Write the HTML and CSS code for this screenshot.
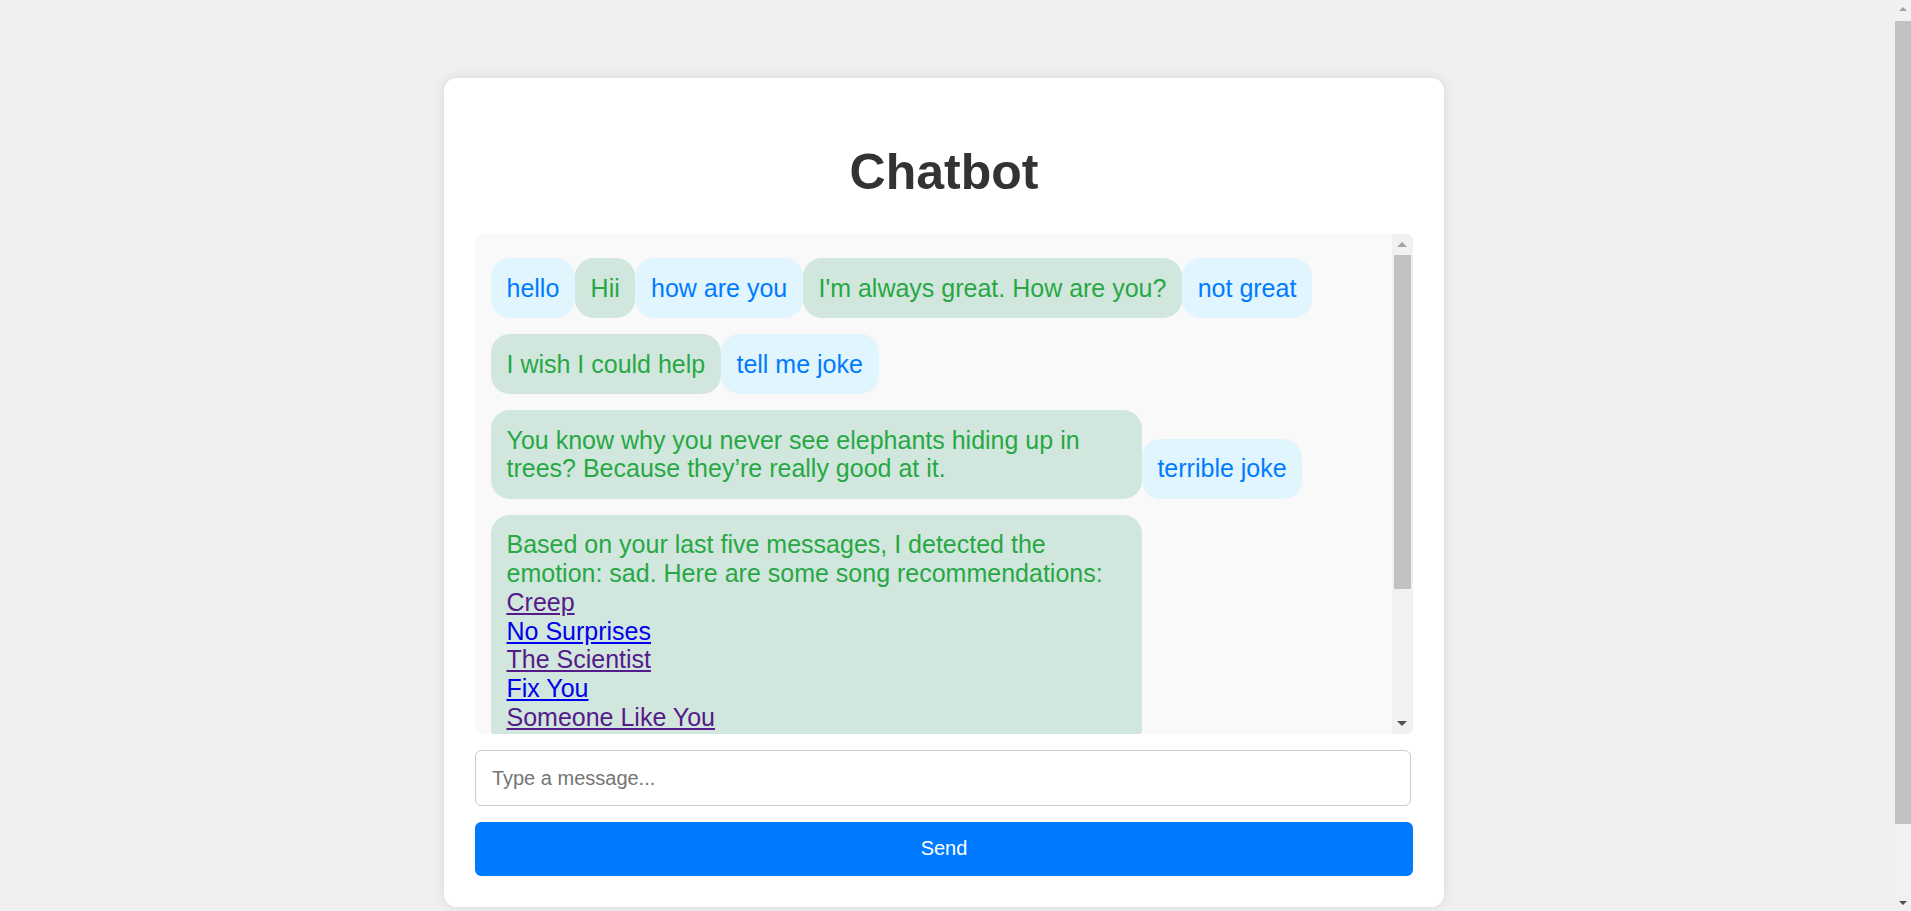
FILE: index.html
```html
<!DOCTYPE html>
<html lang="en">
<head>
<meta charset="utf-8">
<title>Chatbot</title>
<link rel="stylesheet" href="styles.css">
</head>
<body>
<div class="page">
  <div class="card">
    <h1 class="title">Chatbot</h1>
    <div class="chat-box">
      <div class="messages">
        <div class="msg user">hello</div>
        <div class="msg bot">Hii</div>
        <div class="msg user">how are you</div>
        <div class="msg bot">I'm always great. How are you?</div>
        <div class="msg user">not great</div>
        <div class="msg bot">I wish I could help</div>
        <div class="msg user">tell me joke</div>
        <div class="msg bot">You know why you never see elephants hiding up in trees? Because they’re really good at it.</div>
        <div class="msg user">terrible joke</div>
        <div class="msg bot">Based on your last five messages, I detected the emotion: sad. Here are some song recommendations:<br><a class="song visited" href="#creep">Creep</a><br><a class="song" href="#no-surprises">No Surprises</a><br><a class="song visited" href="#the-scientist">The Scientist</a><br><a class="song" href="#fix-you">Fix You</a><br><a class="song visited" href="#someone-like-you">Someone Like You</a></div>
      </div>
      <div class="vscroll inner">
        <div class="sb-btn"><svg width="10" height="5" viewBox="0 0 10 5"><polygon points="5,0 10,5 0,5" fill="#a3a3a3"/></svg></div>
        <div class="sb-track"><div class="sb-thumb"></div></div>
        <div class="sb-btn"><svg width="10" height="5" viewBox="0 0 10 5"><polygon points="0,0 10,0 5,5" fill="#505050"/></svg></div>
      </div>
    </div>
    <input class="chat-input" type="text" placeholder="Type a message...">
    <button class="send-btn" type="button">Send</button>
  </div>
</div>
<div class="vscroll page-sb">
  <div class="sb-btn"><svg width="8" height="4" viewBox="0 0 8 4"><polygon points="4,0 8,4 0,4" fill="#a3a3a3"/></svg></div>
  <div class="sb-track"><div class="sb-thumb"></div></div>
  <div class="sb-btn"><svg width="8" height="4" viewBox="0 0 8 4"><polygon points="0,0 8,0 4,4" fill="#505050"/></svg></div>
</div>
</body>
</html>
```

FILE: styles.css
```css
html {
  background: #f0f0f0;
}

body {
  margin: 0;
  font-family: "Liberation Sans", Arial, sans-serif;
  background: #f0f0f0;
}

.page {
  padding: 78px 23px 86px 0;
}

.card {
  box-sizing: border-box;
  width: 1000px;
  margin: 0 auto;
  padding: 31.25px;
  background: #ffffff;
  border-radius: 12.5px;
  box-shadow: 0 0 12.5px rgba(0, 0, 0, 0.1);
}

.title {
  margin: 33.5px 0;
  font-size: 50px;
  font-weight: bold;
  color: #333333;
  text-align: center;
}

.chat-box {
  display: flex;
  height: 500px;
  background: #f9f9f9;
  border-radius: 6.25px;
  overflow: hidden;
}

.messages {
  flex: 1;
  min-width: 0;
  padding: 15.625px;
  display: flex;
  flex-wrap: wrap;
  align-items: last baseline;
  align-content: flex-start;
  overflow: hidden;
}

.msg {
  max-width: 70%;
  margin: 8px 0;
  padding: 15.625px;
  font-size: 25px;
  line-height: 28.75px;
  border-radius: 18.75px;
}

.msg.user {
  background: #e1f5fe;
  color: #007bff;
}

.msg.bot {
  background: #d1e7dd;
  color: #28a745;
}

.song {
  color: #0000ee;
  text-decoration: underline;
}

.song.visited {
  color: #551a8b;
}

.chat-input {
  display: block;
  box-sizing: border-box;
  width: calc(100% - 1.5px);
  margin: 15.625px 0 0;
  padding: 15.625px;
  font-family: "Liberation Sans", Arial, sans-serif;
  font-size: 20px;
  line-height: normal;
  color: #333333;
  background: #ffffff;
  border: 1px solid #cccccc;
  border-radius: 6.25px;
  outline: none;
}

.chat-input::placeholder {
  color: #757575;
}

.send-btn {
  display: block;
  box-sizing: border-box;
  width: 100%;
  margin: 15.625px 0 0;
  padding: 15.625px;
  font-family: "Liberation Sans", Arial, sans-serif;
  font-size: 20px;
  line-height: normal;
  color: #ffffff;
  background: #007bff;
  border: none;
  border-radius: 6.25px;
}

/* drawn scrollbars */
.vscroll {
  display: flex;
  flex-direction: column;
  background: #f1f1f1;
}

.sb-btn {
  display: flex;
  align-items: center;
  justify-content: center;
  flex: none;
}

.sb-btn svg {
  display: block;
}

.sb-track {
  flex: 1;
}

.sb-thumb {
  background: #c1c1c1;
}

.vscroll.inner {
  width: 21px;
  flex: none;
}

.inner .sb-btn {
  height: 21px;
}

.inner .sb-thumb {
  height: 334px;
  margin: 0 2px;
}

.vscroll.page-sb {
  position: fixed;
  top: 0;
  right: 0;
  width: 17px;
  height: 100vh;
}

.page-sb .sb-btn {
  height: 17px;
}

.page-sb .sb-thumb {
  height: 803px;
  margin: 4px 0 0 1px;
}
```
